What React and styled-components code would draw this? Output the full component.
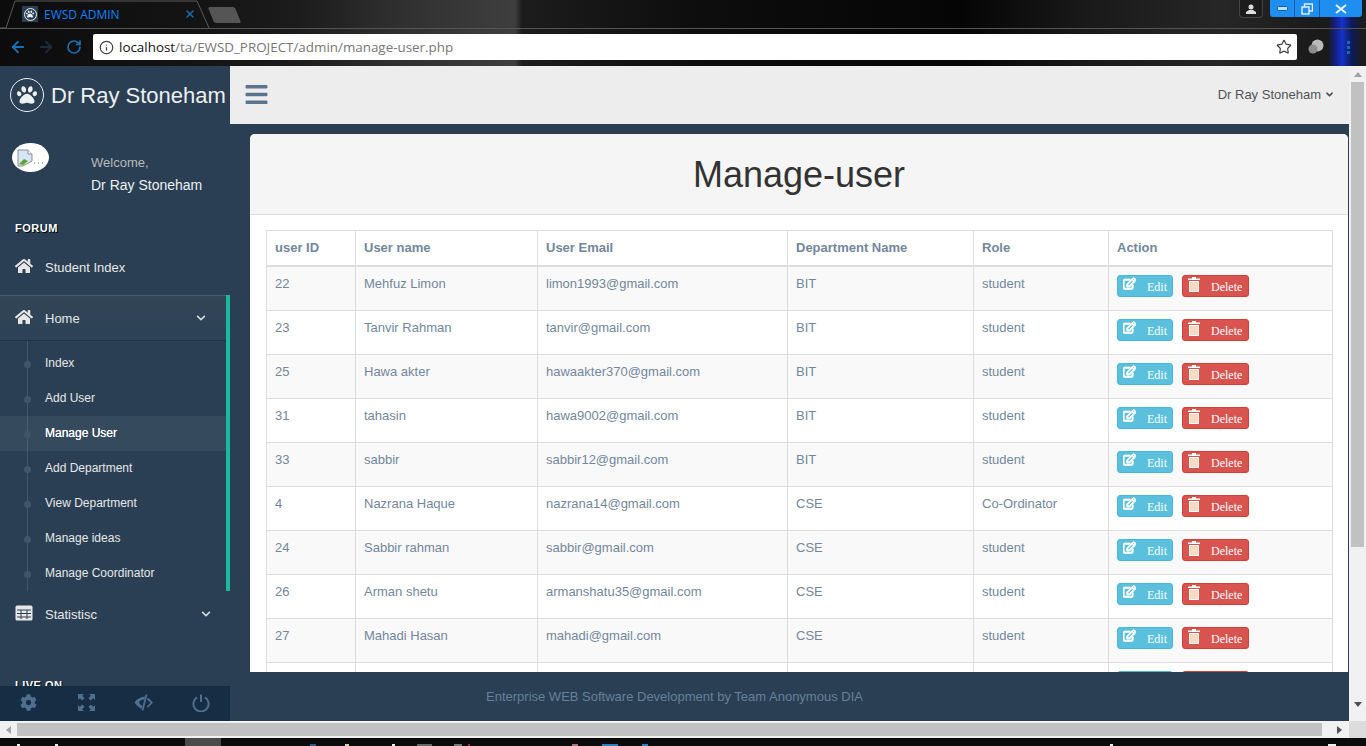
import React from 'react';
import styled, { createGlobalStyle } from 'styled-components';
import { FaPaw, FaHome, FaChevronDown, FaCog, FaBars, FaRegEdit, FaAngleDown } from 'react-icons/fa';
import { ArrowLeft, ArrowRight, RotateCw, Info, Star, X } from 'lucide-react';

const GlobalStyle = createGlobalStyle`
  html, body {
    margin: 0;
    padding: 0;
    overflow: hidden;
    background: #0a0a0a;
  }
  * { box-sizing: border-box; }
`;

const Screen = styled.div`
  width: 1366px;
  height: 746px;
  display: flex;
  flex-direction: column;
  overflow: hidden;
  font-family: "Liberation Sans", Arial, sans-serif;
`;

/* browser chrome */
const BrowserBar = styled.div`
  height: 66px;
  flex: none;
  display: flex;
  flex-direction: column;
  background:
    linear-gradient(90deg, transparent 1328px, #12208a 1336px, #1433c8 1342px, #0e1a55 1352px, #1c1c1c 1362px),
    linear-gradient(90deg, #0c0c0c 0, #141414 200px, #1c1c1c 300px, #303030 400px, #3e3e3e 515px, #1c1c1c 522px, #0d0d0d 700px, #050505 960px, #1a1a1a 1090px, #262626 1220px, #1a1a1a 1320px);
`;

const TabRow = styled.div`
  height: 29px;
  flex: none;
  display: flex;
  align-items: flex-start;
  border-bottom: 1px solid #555;
  position: relative;
`;

const TabOutline = styled.svg`
  position: absolute;
  left: 0;
  top: 0;
`;

const Tab = styled.div`
  width: 206px;
  height: 29px;
  margin-left: 22px;
  flex: none;
  display: flex;
  align-items: center;
  position: relative;
  padding-bottom: 1px;
`;

const Favicon = styled.div`
  width: 16px;
  height: 16px;
  background: #2a3f54;
  display: flex;
  align-items: center;
  justify-content: center;
  color: #ecf0f1;
  font-size: 9px;
  flex: none;
`;

const FaviconRing = styled.div`
  width: 13px;
  height: 13px;
  border: 1px solid #ecf0f1;
  border-radius: 50%;
  display: flex;
  align-items: center;
  justify-content: center;
`;

const TabTitle = styled.span`
  margin-left: 6px;
  width: 140px;
  font-family: "Open Sans", sans-serif;
  font-size: 12px;
  color: #0a84ff;
  white-space: nowrap;
`;

const TabClose = styled(X)`
  color: #1570b0;
  flex: none;
`;

const NewTab = styled.div`
  width: 27px;
  height: 16px;
  margin: 7px 0 0 -17px;
  background: #555;
  border-radius: 2px;
  transform: skewX(22deg);
  flex: none;
`;

const WindowTools = styled.div`
  margin-left: auto;
  display: flex;
  align-items: flex-start;
  padding-right: 4px;
`;

const ProfileButton = styled.div`
  width: 24px;
  height: 18px;
  margin-right: 7px;
  border: 1px solid #444;
  border-top: 0;
  border-radius: 0 0 4px 4px;
  background: #1c1c1c;
  display: flex;
  align-items: center;
  justify-content: center;
`;

const WindowButtons = styled.div`
  display: flex;
  height: 17px;
  background: #1f8ef1;
  border-radius: 0 0 3px 3px;
  overflow: hidden;
`;

const WindowButton = styled.div`
  width: ${p => p.$w}px;
  height: 17px;
  display: flex;
  align-items: center;
  justify-content: center;
  border-right: 1px solid #0c5fae;
  color: #dff0ff;
  &:last-child { border-right: 0; }
`;

const AddressRow = styled.div`
  height: 37px;
  display: flex;
  align-items: center;
  padding: 0 0 1px 4px;
`;

const NavIcon = styled.div`
  width: 28px;
  flex: none;
  display: flex;
  justify-content: center;
  color: ${p => (p.$off ? '#1a2c3d' : '#1a6fb0')};
`;

const AddressBox = styled.div`
  width: 1204px;
  height: 26px;
  margin-left: 5px;
  background: #fff;
  border-radius: 2px;
  display: flex;
  align-items: center;
  padding: 0 5px 0 6px;
  font-family: "Open Sans", sans-serif;
  font-size: 13.4px;
  color: #777;
`;

const UrlHost = styled.span`
  color: #111;
  margin-left: 5px;
`;

const UrlStar = styled(Star)`
  margin-left: auto;
  color: #444;
`;

const ExtensionBlob = styled.svg`
  margin-left: 11px;
  flex: none;
`;

const MenuDots = styled.div`
  margin-left: 23px;
  display: flex;
  flex-direction: column;
  gap: 2px;
`;

const MenuDot = styled.div`
  width: 3px;
  height: 3px;
  background: #0f6cc0;
`;

/* page */
const Viewport = styled.div`
  flex: 1;
  display: flex;
  min-height: 0;
`;

const Page = styled.div`
  flex: 1;
  display: flex;
  min-width: 0;
  background: #2a3f54;
`;

const Sidebar = styled.aside`
  width: 230px;
  flex: none;
  display: flex;
  flex-direction: column;
  background: #2a3f54;
`;

const Brand = styled.div`
  height: 58px;
  flex: none;
  display: flex;
  align-items: center;
  padding-left: 10px;
  color: #ecf0f1;
  font-size: 22px;
  white-space: nowrap;
`;

const BrandName = styled.span`
  padding-top: 2px;
`;

const BrandLogo = styled.div`
  width: 34px;
  height: 34px;
  border: 1px solid #ecf0f1;
  border-radius: 50%;
  display: flex;
  align-items: center;
  justify-content: center;
  font-size: 20px;
  margin-right: 7px;
  flex: none;
`;

const SideScroll = styled.div`
  flex: 1;
  min-height: 0;
  overflow: hidden;
`;

const Profile = styled.div`
  display: flex;
  height: 98px;
  padding: 19px 0 0 12px;
`;

const Avatar = styled.div`
  width: 37px;
  height: 29px;
  background: #fff;
  border-radius: 50%;
  display: flex;
  align-items: center;
  padding-left: 5px;
  flex: none;
`;

const ProfileInfo = styled.div`
  margin-left: 42px;
  padding-top: 12px;
`;

const WelcomeLabel = styled.div`
  font-size: 13px;
  line-height: 16px;
  color: #bab8b8;
`;

const ProfileName = styled.div`
  font-size: 14px;
  line-height: 16px;
  margin-top: 6px;
  color: #ecf0f1;
`;

const SectionTitle = styled.h3`
  margin: 0;
  padding-left: 15px;
  height: ${p => p.$h}px;
  line-height: 13px;
  font-size: 11px;
  font-weight: 700;
  letter-spacing: 0.5px;
  color: #fff;
  text-shadow: 1px 1px #000;
  text-transform: uppercase;
`;

const NavRow = styled.div`
  height: ${p => p.$h || 45}px;
  display: flex;
  align-items: center;
  padding-left: 15px;
  color: #e7e7e7;
  font-size: 13px;
`;

const NavIconSlot = styled.span`
  width: 30px;
  flex: none;
  display: flex;
  font-size: 18px;
  margin-top: -3px;
`;

const NavChevron = styled(FaChevronDown)`
  font-size: 10px;
  margin-left: auto;
  margin-right: ${p => p.$r}px;
  color: #d5d9dd;
`;

const ActiveGroup = styled.div`
  border-right: 4px solid #1abb9c;
`;

const HomeRow = styled(NavRow)`
  height: 46px;
  border-top: 1px solid #495c6d;
  border-bottom: 1px solid #1f3143;
  background: linear-gradient(#334556, #2c4257 93%);
`;

const SubList = styled.ul`
  list-style: none;
  margin: 0;
  padding: 5px 0 0;
  position: relative;
  height: 250px;
  &::before {
    content: "";
    position: absolute;
    left: 27px;
    top: 0;
    bottom: 0;
    width: 1px;
    background: #425668;
  }
`;

const SubItem = styled.li`
  height: 35px;
  padding: 0 0 1px 45px;
  display: flex;
  align-items: center;
  font-size: 12px;
  position: relative;
  color: ${p => (p.$active ? '#fff' : '#e7e7e7')};
  font-weight: ${p => (p.$active ? 500 : 400)};
  background: ${p => (p.$active ? 'rgba(255,255,255,0.06)' : 'transparent')};
  text-shadow: ${p => (p.$active ? '0 0 .4px #fff' : 'none')};
  &::before {
    content: "";
    position: absolute;
    left: 24px;
    top: 15px;
    width: 7px;
    height: 7px;
    border-radius: 50%;
    background: #425668;
  }
`;

const SideFooter = styled.div`
  height: 35px;
  flex: none;
  background: #172d44;
  display: grid;
  grid-template-columns: repeat(4, 1fr);
`;

const FooterLink = styled.div`
  display: flex;
  align-items: center;
  justify-content: center;
  padding-bottom: 2px;
  color: #4f6f8f;
  font-size: 17px;
`;

const Main = styled.div`
  flex: 1;
  min-width: 0;
  display: flex;
  flex-direction: column;
`;

const TopNav = styled.div`
  height: 58px;
  flex: none;
  background: #ededed;
  display: flex;
  align-items: center;
  justify-content: space-between;
  padding: 0 14px 2px 14px;
`;

const Hamburger = styled(FaBars)`
  font-size: 25px;
  color: #5a738e;
`;

const UserMenu = styled.div`
  display: flex;
  align-items: center;
  gap: 3px;
  font-size: 13px;
  color: #515356;
`;

const Content = styled.div`
  flex: 1;
  min-height: 0;
  overflow: hidden;
  padding: 10px 1px 0 20px;
`;

const Panel = styled.section`
  background: #fff;
  border-radius: 5px 5px 0 0;
  height: 600px;
`;

const PanelHead = styled.div`
  height: 81px;
  padding-top: 2px;
  background: #f5f5f5;
  border-bottom: 1px solid #ddd;
  border-radius: 5px 5px 0 0;
  display: flex;
  align-items: center;
  justify-content: center;
`;

const PanelTitle = styled.h1`
  margin: 0;
  font-size: 36px;
  font-weight: 500;
  color: #333;
`;

const PanelBody = styled.div`
  padding: 15px 16px 0;
`;

const Grid = styled.table`
  width: 1066px;
  table-layout: fixed;
  border-collapse: collapse;
  font-size: 13px;
  color: #73879c;
`;

const HeadCell = styled.th`
  width: ${p => p.$w}px;
  height: 35px;
  text-align: left;
  padding: 0 8px;
  font-weight: 700;
  border: 1px solid #ddd;
  border-bottom: 2px solid #ddd;
`;

const BodyRow = styled.tr`
  background: ${p => (p.$odd ? '#f9f9f9' : '#fff')};
  &:first-child td { height: 45px; }
`;

const Cell = styled.td`
  height: 44px;
  padding: 8px 8px 0;
  vertical-align: top;
  line-height: 18px;
  border: 1px solid #ddd;
  white-space: nowrap;
`;

const ActionButton = styled.a`
  display: inline-flex;
  align-items: flex-start;
  width: ${p => p.$w}px;
  height: 22px;
  margin-right: 9px;
  padding: 1px 0 0 5px;
  border-radius: 3px;
  border: 1px solid ${p => p.$border};
  background: ${p => p.$bg};
  color: #fff;
  font-family: "Liberation Serif", serif;
  font-size: 12px;
  line-height: 20px;
  vertical-align: top;
`;

const ButtonIcon = styled.span`
  width: ${p => p.$w}px;
  flex: none;
  display: flex;
  font-size: 14px;
`;

const EditGlyph = styled(FaRegEdit)`
  stroke: currentColor;
  stroke-width: 44px;
  font-size: 13px;
`;

const FooterBar = styled.footer`
  height: 49px;
  flex: none;
  background: #2a3f54;
  padding: 0 0 1px 256px;
  display: flex;
  align-items: center;
  font-size: 13px;
  color: #668098;
`;

/* scrollbars */
const VScroll = styled.div`
  width: 17px;
  flex: none;
  background: #f1f1f1;
  display: flex;
  flex-direction: column;
  align-items: center;
  padding-top: 6px;
`;

const VThumb = styled.div`
  width: 13px;
  height: 465px;
  margin-top: 5px;
  background: #c1c1c1;
`;

const Arrow = styled.div`
  width: 0;
  height: 0;
  border-style: solid;
  border-color: transparent;
  ${p => p.$dir === 'up' && 'border-width: 0 4px 5px; border-bottom-color: #a3a3a3;'}
  ${p => p.$dir === 'down' && 'border-width: 5px 4px 0; border-top-color: #505050; margin-top: 155px;'}
  ${p => p.$dir === 'left' && 'border-width: 4px 5px 4px 0; border-right-color: #a3a3a3;'}
  ${p => p.$dir === 'right' && 'border-width: 4px 0 4px 5px; border-left-color: #505050; margin-left: 15px;'}
`;

const HScroll = styled.div`
  height: 17px;
  flex: none;
  background: #f1f1f1;
  display: flex;
  align-items: center;
  padding-left: 6px;
`;

const HThumb = styled.div`
  width: 1305px;
  height: 13px;
  margin-left: 6px;
  background: #c1c1c1;
`;

const ScrollCorner = styled.div`
  width: 17px;
  height: 17px;
  margin-left: auto;
  background: #dcdcdc;
`;

const Taskbar = styled.div`
  height: 8px;
  flex: none;
  background:
    linear-gradient(#eee, #eee) 17px 6px / 3px 2px no-repeat,
    linear-gradient(#eee, #eee) 55px 6px / 3px 2px no-repeat,
    linear-gradient(#2b5a88, #2b5a88) 310px 6px / 6px 2px no-repeat,
    linear-gradient(#d8d0b0, #d8d0b0) 345px 6px / 4px 2px no-repeat,
    linear-gradient(#eee, #eee) 392px 6px / 3px 2px no-repeat,
    linear-gradient(#666, #666) 417px 6px / 15px 2px no-repeat,
    linear-gradient(#777, #777) 454px 6px / 8px 2px no-repeat,
    linear-gradient(#a33, #a33) 468px 6px / 2px 2px no-repeat,
    linear-gradient(#a77, #a77) 572px 6px / 6px 2px no-repeat,
    linear-gradient(#2a7fc0, #2a7fc0) 602px 6px / 16px 2px no-repeat,
    linear-gradient(#2a7fc0, #2a7fc0) 642px 6px / 6px 2px no-repeat,
    linear-gradient(#eee, #eee) 1110px 6px / 3px 2px no-repeat,
    linear-gradient(#eee, #eee) 1328px 6px / 8px 2px no-repeat,
    linear-gradient(#4a4a4a, #4a4a4a) 185px 0 / 36px 8px no-repeat,
    #0b0b0b;
`;

const users = [
  ['22', 'Mehfuz Limon', 'limon1993@gmail.com', 'BIT', 'student'],
  ['23', 'Tanvir Rahman', 'tanvir@gmail.com', 'BIT', 'student'],
  ['25', 'Hawa akter', 'hawaakter370@gmail.com', 'BIT', 'student'],
  ['31', 'tahasin', 'hawa9002@gmail.com', 'BIT', 'student'],
  ['33', 'sabbir', 'sabbir12@gmail.com', 'BIT', 'student'],
  ['4', 'Nazrana Haque', 'nazrana14@gmail.com', 'CSE', 'Co-Ordinator'],
  ['24', 'Sabbir rahman', 'sabbir@gmail.com', 'CSE', 'student'],
  ['26', 'Arman shetu', 'armanshatu35@gmail.com', 'CSE', 'student'],
  ['27', 'Mahadi Hasan', 'mahadi@gmail.com', 'CSE', 'student'],
];

const columns = [
  ['user ID', 89],
  ['User name', 182],
  ['User Email', 250],
  ['Department Name', 186],
  ['Role', 135],
  ['Action', 224],
];

const subLinks = ['Index', 'Add User', 'Manage User', 'Add Department', 'View Department', 'Manage ideas', 'Manage Coordinator'];

const TrashIcon = () => (
  <svg width="12" height="15" viewBox="0 0 12 15">
    <path d="M4 0h4v1.5h4V3H0V1.5h4z" fill="#fff" />
    <rect x="1" y="4" width="10" height="11" fill="#fff" />
    <path d="M3 5v9M5 5v9M7 5v9M9 5v9" stroke="#f5c39a" strokeWidth="1.2" />
  </svg>
);

const TableIcon = () => (
  <svg width="18" height="16" viewBox="0 0 18 16" fill="none">
    <rect x="0.5" y="0.5" width="17" height="15" rx="1.5" fill="#e7e7e7" />
    <path d="M2 5h14M2 8.500h14M2 12h14" stroke="#2a3f54" strokeWidth="1" />
    <path d="M6 5v9M12 5v9" stroke="#2a3f54" strokeWidth="1" />
  </svg>
);

const BrokenImage = () => (
  <svg width="28" height="18" viewBox="0 0 28 18">
    <path d="M1 1h10l4 4v7L6 17H1z" fill="#d7e6f7" stroke="#8c8c8c" />
    <path d="M2 15l5-5 4 2-5 4z" fill="#5aa82e" />
    <path d="M11 1v4h4" fill="#fff" stroke="#8c8c8c" />
    <path d="M17 14h1M21 14h1M25 14h1" stroke="#5a7ea8" />
  </svg>
);

const FullscreenIcon = () => (
  <svg width="17" height="17" viewBox="0 0 17 17" fill="currentColor">
    <path d="M0 0h6L4.200 1.800 6.600 4.200 4.200 6.600 1.800 4.200 0 6zM17 0v6l-1.800-1.800-2.400 2.400-2.400-2.400 2.400-2.400L11 0zM0 17v-6l1.800 1.800 2.400-2.400 2.400 2.400-2.400 2.400L6 17zM17 17h-6l1.800-1.800-2.400-2.400 2.400-2.400 2.400 2.400L17 11z" />
  </svg>
);

const EyeCloseIcon = () => (
  <svg width="19" height="17" viewBox="0 0 19 17">
    <path d="M11 2.500C6.500 2.800 2.500 5.500 0.500 8.500 2 11 4.500 13.500 7.500 14.800L8.400 11.800C6.800 11.300 5.600 10.100 5 8.600 5.800 6.800 7.800 5.700 10.200 5.600z" fill="currentColor" />
    <path d="M12.500 0.500 8.500 16.500" stroke="currentColor" strokeWidth="1.800" />
    <path d="M13.500 4.500 17.800 8.500 13.500 13" stroke="currentColor" strokeWidth="1.800" fill="none" />
  </svg>
);

const PowerIcon = () => (
  <svg width="18" height="18" viewBox="0 0 18 18" fill="none" stroke="currentColor" strokeWidth="2">
    <path d="M5 3.400a7.600 7.600 0 1 0 8 0" />
    <path d="M9 0.500v7.500" />
  </svg>
);

const ActionButtons = ({ labelled = true }) => (
  <>
    <ActionButton $w={56} $bg="#5bc0de" $border="#46b8da">
      <ButtonIcon $w={24}><EditGlyph /></ButtonIcon>
      {labelled && 'Edit'}
    </ActionButton>
    <ActionButton $w={67} $bg="#d9534f" $border="#d43f3a">
      <ButtonIcon $w={23}><TrashIcon /></ButtonIcon>
      {labelled && 'Delete'}
    </ActionButton>
  </>
);

const App = () => {
  return (
    <Screen>
      <GlobalStyle />
      <BrowserBar>
        <TabRow>
          <TabOutline width="230" height="29">
            <path d="M0 28H6L15 1H197L209 28" fill="none" stroke="#5a5a5a" />
          </TabOutline>
          <Tab>
            <Favicon>
              <FaviconRing><FaPaw size={8} /></FaviconRing>
            </Favicon>
            <TabTitle>EWSD ADMIN</TabTitle>
            <TabClose size={12} strokeWidth={3} />
          </Tab>
          <NewTab />
          <WindowTools>
            <ProfileButton>
              <svg width="10" height="10" viewBox="0 0 10 10" fill="#ddd">
                <circle cx="5" cy="3" r="2.5" />
                <path d="M0 10V8l3-2h4l3 2v2z" />
              </svg>
            </ProfileButton>
            <WindowButtons>
              <WindowButton $w={25}>
                <svg width="11" height="5"><rect x="0.5" y="0.5" width="10" height="4" rx="1" fill="#bfe0ff" stroke="#0c5fae" /></svg>
              </WindowButton>
              <WindowButton $w={25}>
                <svg width="12" height="12" fill="none" stroke="#e6f3ff" strokeWidth="1.4">
                  <rect x="3.5" y="1" width="8" height="7" />
                  <rect x="1" y="4" width="7" height="7" fill="#1f8ef1" />
                </svg>
              </WindowButton>
              <WindowButton $w={42}>
                <svg width="12" height="10" stroke="#e6f3ff" strokeWidth="2"><path d="M1 1l10 8M11 1L1 9" /></svg>
              </WindowButton>
            </WindowButtons>
          </WindowTools>
        </TabRow>
        <AddressRow>
          <NavIcon><ArrowLeft size={18} strokeWidth={2.4} /></NavIcon>
          <NavIcon $off><ArrowRight size={18} strokeWidth={2.4} /></NavIcon>
          <NavIcon><RotateCw size={16} strokeWidth={2.6} /></NavIcon>
          <AddressBox>
            <Info size={15} strokeWidth={2} color="#444" />
            <UrlHost>localhost</UrlHost>/ta/EWSD_PROJECT/admin/manage-user.php
            <UrlStar size={16} strokeWidth={1.8} />
          </AddressBox>
          <ExtensionBlob width="16" height="16" viewBox="0 0 16 16">
            <circle cx="9.5" cy="6.5" r="6" fill="#b9b9b9" />
            <circle cx="5" cy="10" r="4.5" fill="#8e8e8e" />
          </ExtensionBlob>
          <MenuDots>
            <MenuDot /><MenuDot /><MenuDot />
          </MenuDots>
        </AddressRow>
      </BrowserBar>

      <Viewport>
        <Page>
          <Sidebar>
            <Brand>
              <BrandLogo><FaPaw /></BrandLogo>
              <BrandName>Dr Ray Stoneham</BrandName>
            </Brand>
            <SideScroll>
              <Profile>
                <Avatar><BrokenImage /></Avatar>
                <ProfileInfo>
                  <WelcomeLabel>Welcome,</WelcomeLabel>
                  <ProfileName>Dr Ray Stoneham</ProfileName>
                </ProfileInfo>
              </Profile>
              <SectionTitle $h={23}>Forum</SectionTitle>
              <NavRow $h={45}>
                <NavIconSlot><FaHome /></NavIconSlot>
                Student Index
              </NavRow>
              <NavRow $h={5} />
              <ActiveGroup>
                <HomeRow>
                  <NavIconSlot><FaHome /></NavIconSlot>
                  Home
                  <NavChevron $r={20} />
                </HomeRow>
                <SubList>
                  {subLinks.map(link => (
                    <SubItem key={link} $active={link === 'Manage User'}>{link}</SubItem>
                  ))}
                </SubList>
              </ActiveGroup>
              <NavRow $h={46}>
                <NavIconSlot><TableIcon /></NavIconSlot>
                Statistisc
                <NavChevron $r={19} />
              </NavRow>
              <NavRow $h={42} />
              <SectionTitle $h={13}>Live On</SectionTitle>
            </SideScroll>
            <SideFooter>
              <FooterLink><FaCog /></FooterLink>
              <FooterLink><FullscreenIcon /></FooterLink>
              <FooterLink><EyeCloseIcon /></FooterLink>
              <FooterLink><PowerIcon /></FooterLink>
            </SideFooter>
          </Sidebar>

          <Main>
            <TopNav>
              <Hamburger />
              <UserMenu>
                Dr Ray Stoneham
                <FaAngleDown size={11} />
              </UserMenu>
            </TopNav>
            <Content>
              <Panel>
                <PanelHead>
                  <PanelTitle>Manage-user</PanelTitle>
                </PanelHead>
                <PanelBody>
                  <Grid>
                    <thead>
                      <tr>
                        {columns.map(([label, width]) => (
                          <HeadCell key={label} $w={width}>{label}</HeadCell>
                        ))}
                      </tr>
                    </thead>
                    <tbody>
                      {users.map((user, i) => (
                        <BodyRow key={user[0]} $odd={i % 2 === 0}>
                          {user.map((value, j) => (
                            <Cell key={j}>{value}</Cell>
                          ))}
                          <Cell><ActionButtons /></Cell>
                        </BodyRow>
                      ))}
                      <BodyRow>
                        <Cell /><Cell /><Cell /><Cell /><Cell />
                        <Cell><ActionButtons labelled={false} /></Cell>
                      </BodyRow>
                    </tbody>
                  </Grid>
                </PanelBody>
              </Panel>
            </Content>
            <FooterBar>Enterprise WEB Software Development by Team Anonymous DIA</FooterBar>
          </Main>
        </Page>
        <VScroll>
          <Arrow $dir="up" />
          <VThumb />
          <Arrow $dir="down" />
        </VScroll>
      </Viewport>

      <HScroll>
        <Arrow $dir="left" />
        <HThumb />
        <Arrow $dir="right" />
        <ScrollCorner />
      </HScroll>
      <Taskbar />
    </Screen>
  );
};

export default App;
